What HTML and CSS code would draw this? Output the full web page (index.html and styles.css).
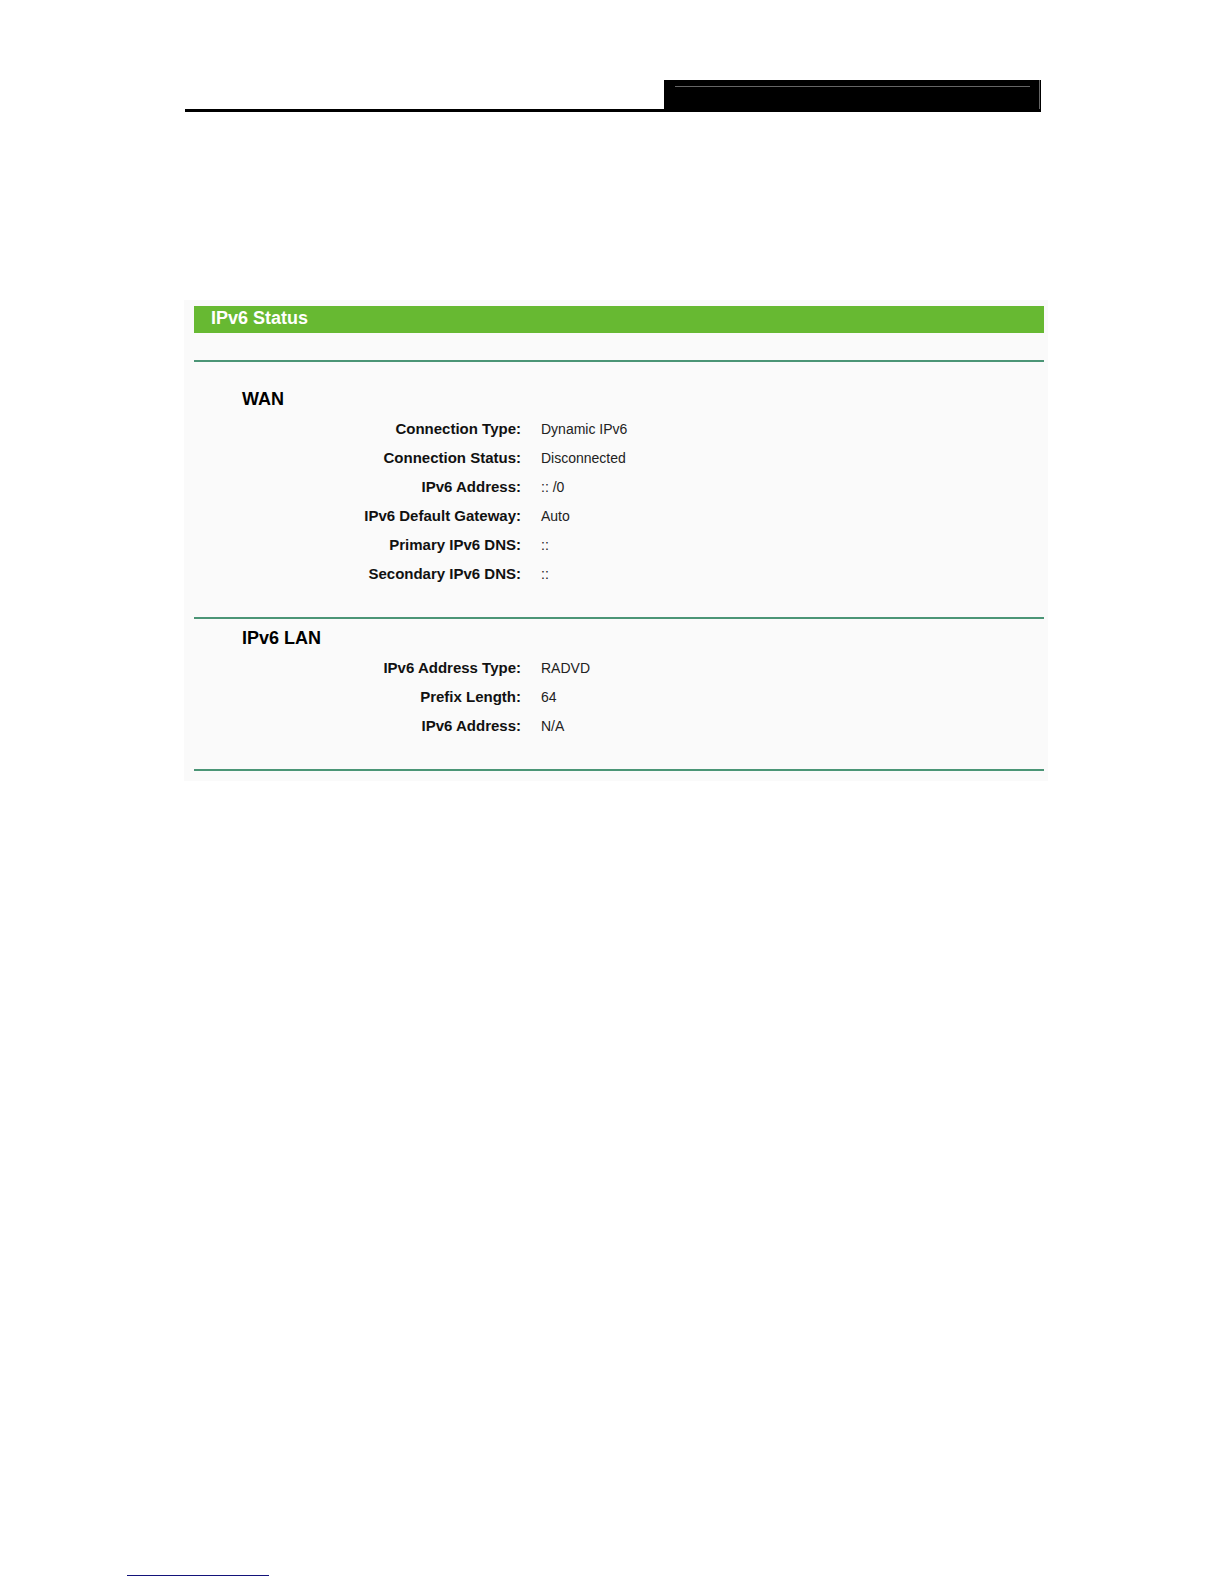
FILE: index.html
```html
<!DOCTYPE html>
<html lang="en">
  <head>
    <meta charset="utf-8" />
    <title>IPv6 Status</title>
    <link rel="stylesheet" href="styles.css">
  </head>
  <body>
    <header class="page-header">
      <div class="header-tab">
        <div class="tab-rule"></div>
      </div>
    </header>

    <main class="panel">
      <h1>IPv6 Status</h1>

      <section class="wan">
        <h2 id="wan">WAN</h2>
        <table aria-labelledby="wan">
          <tbody>
            <tr>
              <th scope="row">Connection Type:</th>
              <td>Dynamic IPv6</td>
            </tr>
            <tr>
              <th scope="row">Connection Status:</th>
              <td>Disconnected</td>
            </tr>
            <tr>
              <th scope="row">IPv6 Address:</th>
              <td>:: /0</td>
            </tr>
            <tr>
              <th scope="row">IPv6 Default Gateway:</th>
              <td>Auto</td>
            </tr>
            <tr>
              <th scope="row">Primary IPv6 DNS:</th>
              <td>::</td>
            </tr>
            <tr>
              <th scope="row">Secondary IPv6 DNS:</th>
              <td>::</td>
            </tr>
          </tbody>
        </table>
      </section>

      <section class="lan">
        <h2 id="lan">IPv6 LAN</h2>
        <table aria-labelledby="lan">
          <tbody>
            <tr>
              <th scope="row">IPv6 Address Type:</th>
              <td>RADVD</td>
            </tr>
            <tr>
              <th scope="row">Prefix Length:</th>
              <td>64</td>
            </tr>
            <tr>
              <th scope="row">IPv6 Address:</th>
              <td>N/A</td>
            </tr>
          </tbody>
        </table>
      </section>
    </main>

    <footer class="page-footer">
      <div class="footer-rule"></div>
    </footer>
  </body>
</html>
```

FILE: styles.css
```css
* {
  box-sizing: border-box;
}

body {
  display: flex;
  flex-direction: column;
  min-height: 100vh;
  margin: 0;
  padding-top: 80px;
  background-color: #fff;
  font-family: "Liberation Sans", Arial, sans-serif;
}

/* Page header */
.page-header {
  display: flex;
  justify-content: flex-end;
  margin: 0 183px 0 185px;
  border-bottom: 3px solid #000;
}

.header-tab {
  width: 44%;
  height: 29px;
  padding: 6px 10px 0 11px;
  background-color: #000;
  border-right: 1px solid #000;
  box-shadow: inset -1px 0 #666;
}

.tab-rule {
  border-top: 1px solid #666;
}

/* Status panel */
.panel {
  margin: 188px 176px 0 184px;
  padding: 6px 4px 10px 10px;
  background-color: #fafafa;
}

h1 {
  margin: 0 0 27px;
  padding: 0 0 3px 17px;
  background-color: #67b932;
  color: #fff;
  font-size: 18px;
  line-height: 24px;
}

h2 {
  margin: 0;
  padding-left: 48px;
  color: #000;
  font-size: 18px;
  line-height: 29px;
}

section {
  padding-bottom: 29px;
  border-top: 2px solid #4b9576;
}

.wan {
  padding-top: 23px;
}

.lan {
  padding-top: 5px;
  border-bottom: 2px solid #4b9576;
}

table {
  width: 100%;
  border-collapse: collapse;
  table-layout: fixed;
}

th {
  width: 40%;
  padding: 0 13px 0 0;
  color: #111;
  font-size: 15px;
  line-height: 29px;
  text-align: right;
}

td {
  padding: 2px 0 0 7px;
  color: #222;
  font-size: 14px;
  line-height: 27px;
}

/* Footer */
.page-footer {
  margin-top: auto;
  padding: 0 127px 8px;
}

.footer-rule {
  width: 142px;
  border-top: 1px solid #13137a;
}
```
